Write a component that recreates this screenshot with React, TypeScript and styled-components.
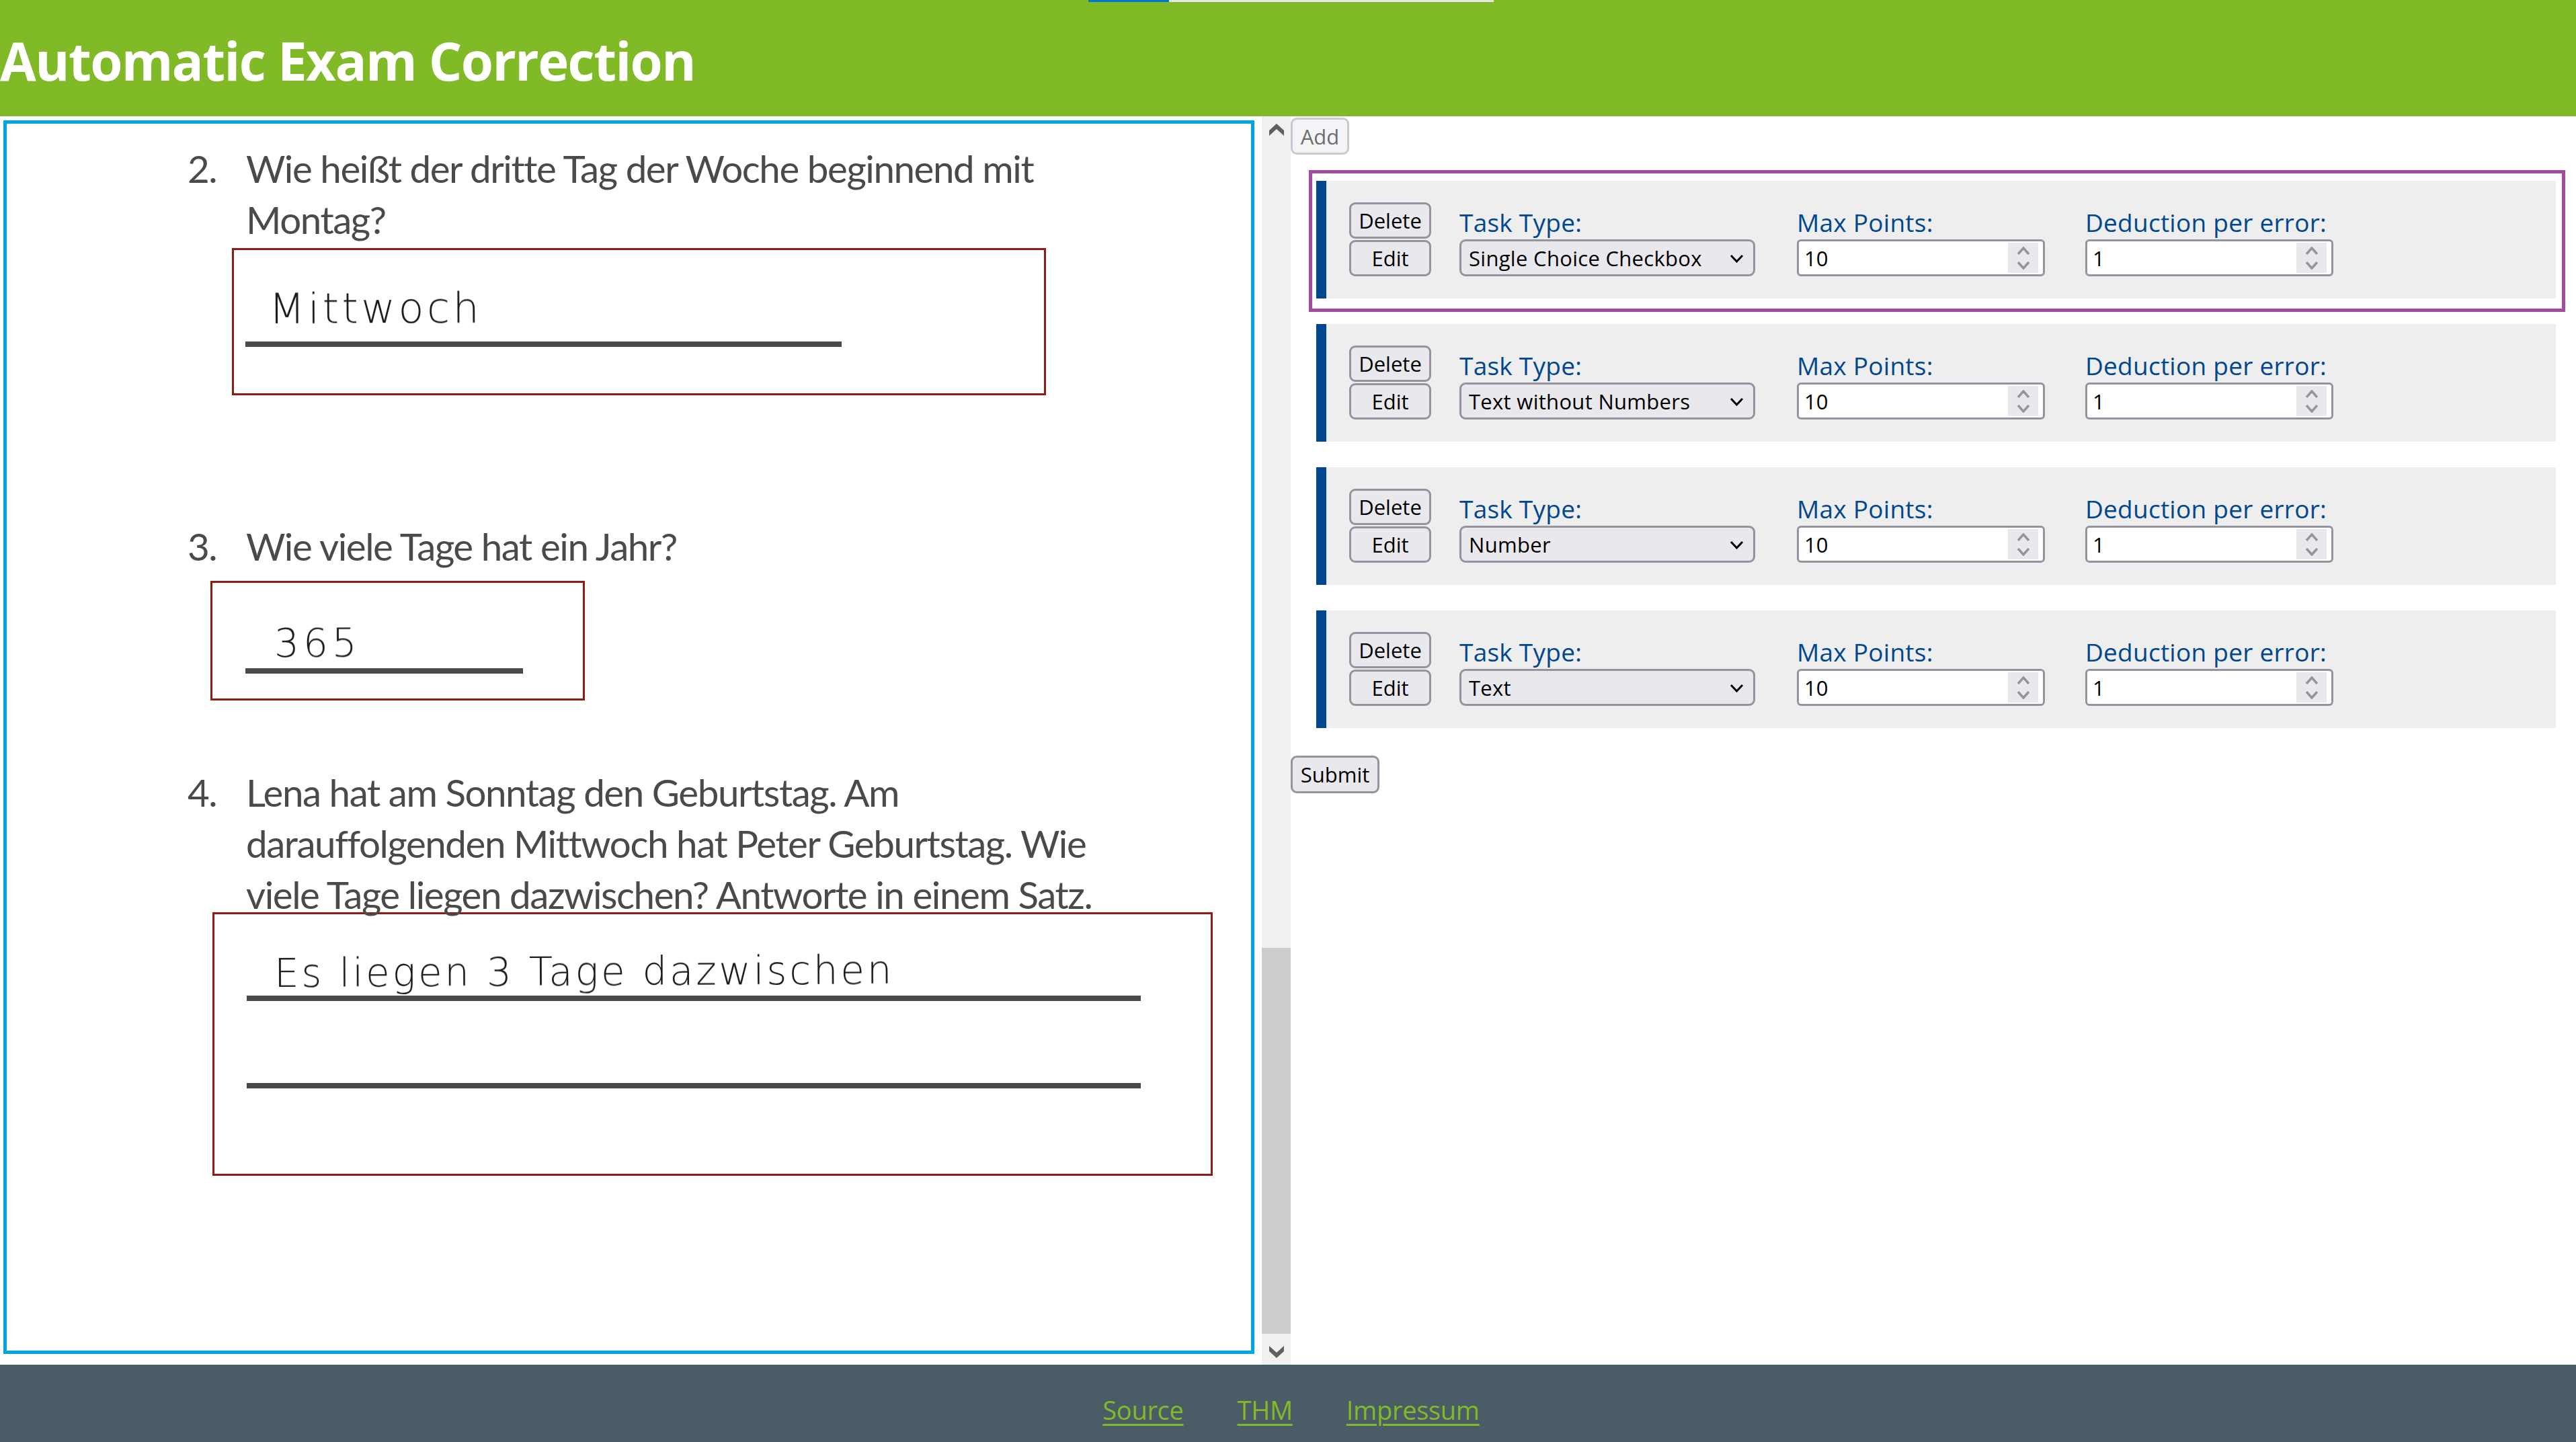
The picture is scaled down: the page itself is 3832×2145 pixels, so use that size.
import styled, { createGlobalStyle } from 'styled-components';

const GlobalStyle = createGlobalStyle`
    html, body {
        margin: 0;
        padding: 0;
        overflow: hidden;
        background: #fff;
    }
    * {
        box-sizing: border-box;
    }
`

const uiFont = `"Open Sans", "Noto Sans", sans-serif`;

const Page = styled.div`
    width: 3832px;
    height: 2145px;
    display: flex;
    flex-direction: column;
    font-family: ${uiFont};
`

const Header = styled.header`
    position: relative;
    height: 173px;
    flex: none;
    background-color: #80ba27;
    display: flex;
    align-items: center;
    padding-top: 6px;
    >h1 {
        margin: 0;
        color: #fff;
        font-size: 78px;
        font-weight: 700;
        letter-spacing: -1.6px;
    }
`

const LoadBar = styled.div`
    position: absolute;
    top: 0;
    left: 1619px;
    width: 603px;
    height: 3px;
    background: #e6e6e6;
    >div {
        width: 120px;
        height: 3px;
        background: #0078d4;
    }
`

const Main = styled.main`
    flex: 1;
    display: flex;
    min-height: 0;
`

const ExamPane = styled.section`
    width: 1877px;
    flex: none;
    padding: 6px 0 0 5px;
`

const ExamFrame = styled.div`
    width: 1861px;
    height: 1835px;
    border: 5px solid #00a5e6;
    padding: 28px 0 0 269px;
    overflow: hidden;
    display: flex;
    flex-direction: column;
    font-family: Lato, "Open Sans", sans-serif;
    color: #4a4a4a;
`

const Question = styled.div<{ $top?: number }>`
    display: grid;
    grid-template-columns: 87px 1fr;
    margin-top: ${p => p.$top ?? 0}px;
    font-size: 56.5px;
    line-height: 76px;
    letter-spacing: -1.45px;
    width: 1480px;
    white-space: pre-line;
    filter: blur(0.6px);
`

const AnswerBox = styled.div<{ $left: number; $top: number; $width: number; $height: number; $pad: number }>`
    flex: none;
    margin-left: ${p => p.$left - 279}px;
    margin-top: ${p => p.$top}px;
    width: ${p => p.$width}px;
    height: ${p => p.$height}px;
    padding-left: ${p => p.$pad}px;
    border: 3px solid #8f1c12;
    display: flex;
    flex-direction: column;
`

const Handwriting = styled.div<{ $top: number; $left: number; $height: number; $size: number; $spacing: number }>`
    margin-top: ${p => p.$top}px;
    margin-left: ${p => p.$left}px;
    height: ${p => p.$height}px;
    line-height: ${p => p.$height}px;
    font-family: "DejaVu Sans", sans-serif;
    font-weight: 200;
    font-size: ${p => p.$size}px;
    letter-spacing: ${p => p.$spacing}px;
    color: #1c1c1c;
    white-space: nowrap;
    transform: rotate(-0.3deg);
    transform-origin: left center;
    filter: blur(0.4px);
`

const AnswerRule = styled.div<{ $top: number; $width: number }>`
    margin-top: ${p => p.$top}px;
    width: ${p => p.$width}px;
    height: 8px;
    flex: none;
    background: #474a4b;
    filter: blur(0.6px);
`

const ScrollTrack = styled.div`
    width: 43px;
    flex: none;
    background: #f0f0f0;
    display: flex;
    flex-direction: column;
    align-items: stretch;
    >svg {
        display: block;
        margin: 11px auto 0;
    }
`

const ScrollThumb = styled.div`
    margin-top: auto;
    height: 574px;
    background: #cdcdcd;
`

const ScrollDown = styled.div`
    height: 46px;
    display: flex;
    justify-content: center;
    padding-top: 18px;
`

const TaskPane = styled.section`
    flex: 1;
    padding-top: 2px;
    display: flex;
    flex-direction: column;
    align-items: flex-start;
`

const TaskList = styled.div`
    align-self: stretch;
    margin: 39px 30px 41px 38px;
    display: flex;
    flex-direction: column;
    gap: 38px;
`

const NativeButton = styled.button`
    font-family: inherit;
    font-size: 31px;
    letter-spacing: 0;
    padding: 0;
    color: #000;
    background: #e9e9ed;
    border: 3px solid #95939f;
    border-radius: 9px;
    display: flex;
    align-items: center;
    justify-content: center;
`

const AddButton = styled(NativeButton)`
    width: 87px;
    height: 55px;
    color: #6d6d6d;
    background: #f4f4f6;
    border-color: #c9c9d1;
`

const SubmitButton = styled(NativeButton)`
    width: 132px;
    height: 56px;
`

const TaskCard = styled.article<{ $selected?: boolean }>`
    position: relative;
    height: 175px;
    background: #eeeeee;
    border-left: 15px solid #00478f;
    padding: 32px 0 33px 34px;
    display: flex;
    align-items: flex-end;
    ${p => p.$selected && `
        &::before {
            content: '';
            position: absolute;
            top: -16px;
            left: -26px;
            right: -14px;
            bottom: -20px;
            border: 5px solid #a44a9f;
            pointer-events: none;
        }
    `}
`

const CardActions = styled.div`
    width: 122px;
    display: flex;
    flex-direction: column;
    gap: 2px;
    >button {
        height: 54px;
    }
`

const Field = styled.label<{ $width: number; $gap: number }>`
    width: ${p => p.$width}px;
    margin-left: ${p => p.$gap}px;
    display: flex;
    flex-direction: column;
    color: #00478f;
    font-size: 37px;
    letter-spacing: 0.25px;
    line-height: 50px;
    white-space: nowrap;
`

const SelectWrap = styled.div`
    position: relative;
    height: 55px;
    >svg {
        position: absolute;
        top: 22px;
        right: 17px;
    }
`

const TaskSelect = styled.select`
    appearance: none;
    width: 100%;
    height: 100%;
    font-family: inherit;
    font-size: 31px;
    letter-spacing: 0.3px;
    color: #000;
    background: #e9e9ed;
    border: 3px solid #95939f;
    border-radius: 9px;
    padding: 0 0 0 11px;
`

const NumberWrap = styled.div`
    height: 55px;
    background: #fff;
    border: 3px solid #95939f;
    border-radius: 6px;
    display: flex;
    align-items: stretch;
    padding: 2px 7px 2px 8px;
`

const NumberInput = styled.input`
    flex: 1;
    min-width: 0;
    border: 0;
    outline: 0;
    padding: 0;
    font-family: inherit;
    font-size: 31px;
    letter-spacing: 0;
    color: #000;
    background: transparent;
`

const Spinner = styled.div`
    width: 45px;
    flex: none;
    background: #e9e9ed;
    display: flex;
    flex-direction: column;
    align-items: center;
    justify-content: center;
    gap: 10px;
`

const Footer = styled.footer`
    height: 115px;
    flex: none;
    background: #4a5c66;
    display: flex;
    justify-content: center;
    gap: 80px;
    padding: 42px 0 0 9px;
    >a {
        color: #80ba27;
        font-size: 38px;
        font-weight: 400;
        letter-spacing: -0.3px;
        line-height: 50px;
        text-decoration: underline;
        text-decoration-thickness: 3px;
        text-underline-offset: 6px;
    }
`

const ScrollArrow = ({ down }: { down?: boolean }) => (
    <svg width="22" height="18" viewBox="0 0 22 18">
        <path fill="#606060" d={down ? 'M0 0 L11 10 L22 0 V8 L11 18 L0 8Z' : 'M0 18 L11 8 L22 18 V10 L11 0 L0 10Z'} />
    </svg>
);

const SpinArrow = ({ down }: { down?: boolean }) => (
    <svg width="20" height="12" viewBox="0 0 20 12">
        <path fill="none" stroke="#95939f" strokeWidth="3.5" d={down ? 'M2 1 L10 10 L18 1' : 'M2 11 L10 2 L18 11'} />
    </svg>
);

const SelectChevron = () => (
    <svg width="21" height="13" viewBox="0 0 21 13">
        <path fill="none" stroke="#000" strokeWidth="3" d="M2 2 L10.5 11 L19 2" />
    </svg>
);

const taskTypes = ['Single Choice Checkbox', 'Text without Numbers', 'Number', 'Text'];

const NumberField = ({ label, value, gap }: { label: string; value: number; gap: number }) => (
    <Field $width={369} $gap={gap}>
        {label}
        <NumberWrap>
            <NumberInput type="text" defaultValue={value} />
            <Spinner>
                <SpinArrow />
                <SpinArrow down />
            </Spinner>
        </NumberWrap>
    </Field>
);

const App = () => {
    return (
        <Page>
            <GlobalStyle />
            <Header>
                <LoadBar><div /></LoadBar>
                <h1>Automatic Exam Correction</h1>
            </Header>
            <Main>
                <ExamPane>
                    <ExamFrame>
                        <Question>
                            <span>2.</span>
                            <span>{'Wie heißt der dritte Tag der Woche beginnend mit\nMontag?'}</span>
                        </Question>
                        <AnswerBox $left={345} $top={5} $width={1211} $height={219} $pad={17}>
                            <Handwriting $top={53} $left={35} $height={70} $size={62} $spacing={4.5}>Mittwoch</Handwriting>
                            <AnswerRule $top={13} $width={887} />
                        </AnswerBox>
                        <Question $top={186}>
                            <span>3.</span>
                            <span>Wie viele Tage hat ein Jahr?</span>
                        </Question>
                        <AnswerBox $left={313} $top={14} $width={557} $height={178} $pad={49}>
                            <Handwriting $top={64} $left={43} $height={53} $size={58} $spacing={6}>365</Handwriting>
                            <AnswerRule $top={10} $width={413} />
                        </AnswerBox>
                        <Question $top={98}>
                            <span>4.</span>
                            <span>{'Lena hat am Sonntag den Geburtstag. Am\ndarauffolgenden Mittwoch hat Peter Geburtstag. Wie\nviele Tage liegen dazwischen? Antworte in einem Satz.'}</span>
                        </Question>
                        <AnswerBox $left={316} $top={-11} $width={1488} $height={392} $pad={48}>
                            <Handwriting $top={53} $left={41} $height={70} $size={58} $spacing={3.7}>Es liegen 3 Tage dazwischen</Handwriting>
                            <AnswerRule $top={-2} $width={1330} />
                            <AnswerRule $top={122} $width={1330} />
                        </AnswerBox>
                    </ExamFrame>
                </ExamPane>
                <ScrollTrack>
                    <ScrollArrow />
                    <ScrollThumb />
                    <ScrollDown><ScrollArrow down /></ScrollDown>
                </ScrollTrack>
                <TaskPane>
                    <AddButton disabled>Add</AddButton>
                    <TaskList>
                        {taskTypes.map((type, i) => (
                            <TaskCard key={type} $selected={i === 0}>
                                <CardActions>
                                    <NativeButton>Delete</NativeButton>
                                    <NativeButton>Edit</NativeButton>
                                </CardActions>
                                <Field $width={440} $gap={42}>
                                    Task Type:
                                    <SelectWrap>
                                        <TaskSelect defaultValue={type}>
                                            {taskTypes.map(t => <option key={t}>{t}</option>)}
                                        </TaskSelect>
                                        <SelectChevron />
                                    </SelectWrap>
                                </Field>
                                <NumberField label="Max Points:" value={10} gap={62} />
                                <NumberField label="Deduction per error:" value={1} gap={60} />
                            </TaskCard>
                        ))}
                    </TaskList>
                    <SubmitButton>Submit</SubmitButton>
                </TaskPane>
            </Main>
            <Footer>
                <a href="#source">Source</a>
                <a href="#thm">THM</a>
                <a href="#impressum">Impressum</a>
            </Footer>
        </Page>
    );
}

export default App;
